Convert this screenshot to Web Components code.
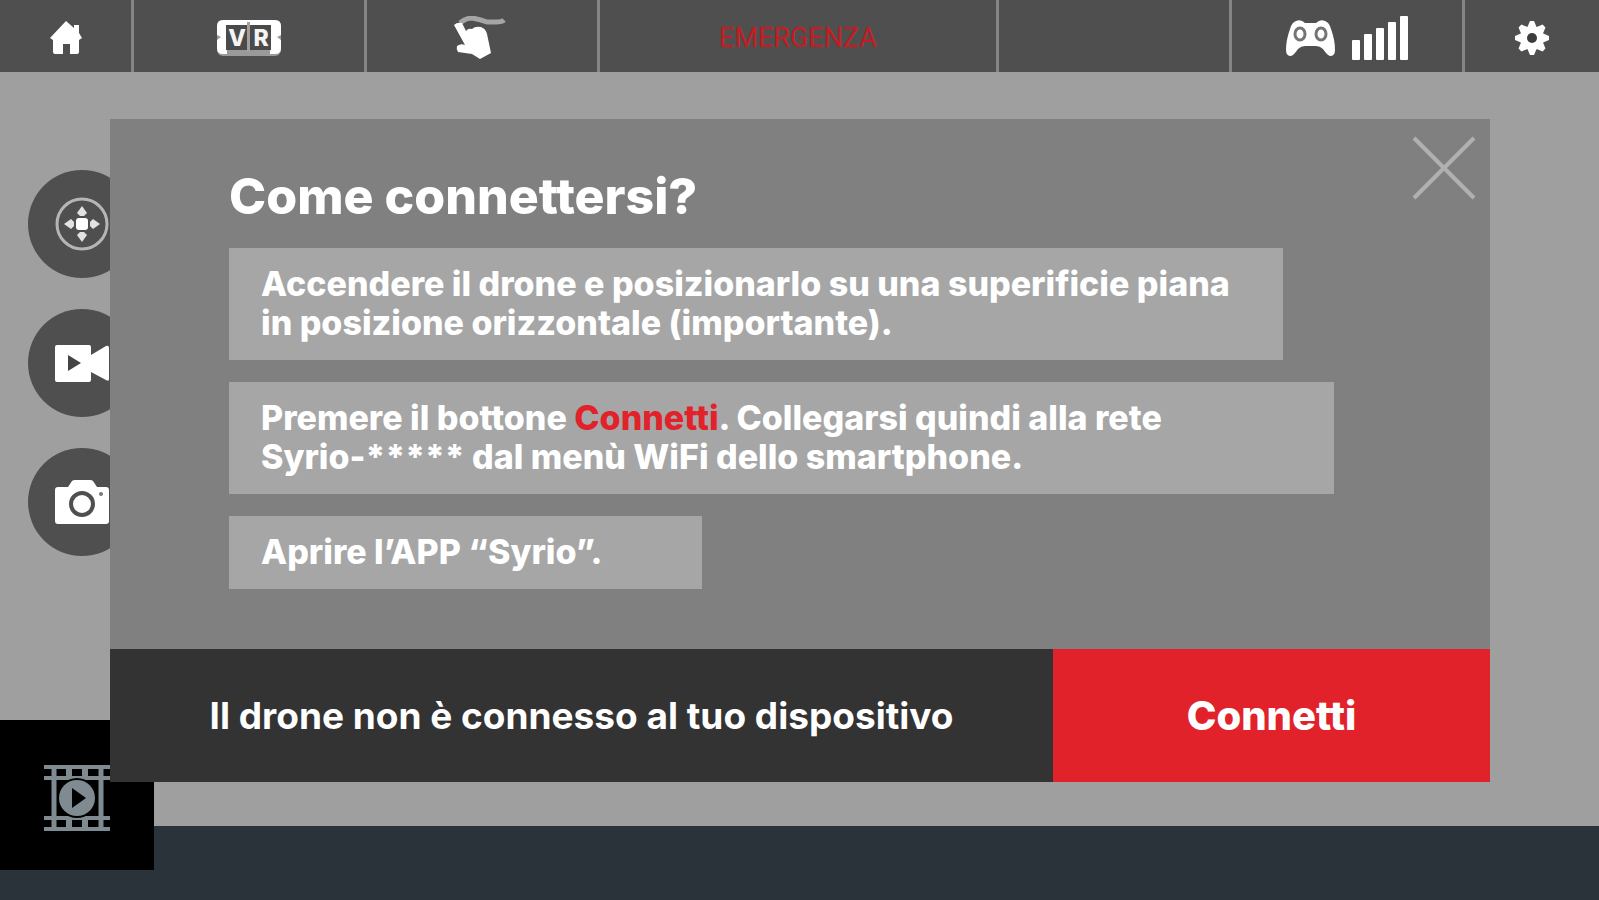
<!DOCTYPE html>
<html lang="it">
<head>
<meta charset="utf-8">
<meta name="viewport" content="width=device-width, initial-scale=1">
<title>Syrio</title>
<style>
  body {
    margin: 0;
    font-family: Inter, "Open Sans", sans-serif;
    color: white;
  }
</style>
</head>
<body>
<drone-app>
  <top-bar slot="header"></top-bar>
  <side-rail slot="main"></side-rail>
  <gallery-button slot="overlay"></gallery-button>
  <connect-dialog slot="overlay" heading="Come connettersi?" status="Il drone non è connesso al tuo dispositivo" action="Connetti">
    <step-item size="92.3%">Accendere il drone e posizionarlo su una superificie piana<br>in posizione orizzontale (importante).</step-item>
    <step-item size="96.8%">Premere il bottone <strong>Connetti</strong>. Collegarsi quindi alla rete<br>Syrio-***** dal menù WiFi dello smartphone.</step-item>
    <step-item size="41.4%">Aprire l’APP “Syrio”.</step-item>
  </connect-dialog>
</drone-app>

<script>
const icons = {
  home: `<svg width="32" height="34" viewBox="0 0 32 34" fill="white">
    <path d="M16 0 L24 7 V4 H29 V12 L32 17 L29 19 V31 Q29 33 27 33 H20 V23 H13 V33 H5 Q3 33 3 31 V19 L0 17 Z"/>
  </svg>`,
  vr: `<svg width="64" height="36" viewBox="0 0 64 36">
    <rect width="64" height="36" rx="6" fill="#9a9a9a"/>
    <path d="M6 0 H58 Q64 0 64 6 V15 L60 17 L64 20 V28 Q64 34 58 34 H53 V5 H10 V34 H6 Q0 34 0 28 V20 L4 17 L0 15 V6 Q0 0 6 0 Z" fill="white"/>
    <rect x="9" y="5" width="45" height="25" fill="#4a4a4a"/>
    <rect x="30" y="2" width="3" height="30" fill="#a0a0a0"/>
    <text x="20" y="26" font-size="23" font-weight="800" text-anchor="middle" fill="#f4f4f4">V</text>
    <text x="44" y="26" font-size="23" font-weight="800" text-anchor="middle" fill="#f4f4f4">R</text>
  </svg>`,
  hand: `<svg width="56" height="43" viewBox="0 0 56 43">
    <path d="M6 7 Q12 2 18 2 Q25 3 33 6 H42 Q48 6 50 4" fill="none" stroke="#a5a5a5" stroke-width="5"/>
    <path d="M0 9 Q3 6 8 7 L12 15 Q14 12 18 13 Q21 10 27 11 Q32 13 33 18 L37 37 L26 43 L18 38 L4 36 Q2 33 3 30 Q7 27 11 29 Z" fill="white"/>
  </svg>`,
  gamepad: `<svg width="49" height="36" viewBox="0 0 49 36">
    <path d="M10 1 Q15 -1 19 3 H30 Q34 -1 39 1 Q43 2 45 9 Q49 20 49 30 Q49 36 44 36 Q41 35 37 29 Q34 26 30 26 H19 Q15 26 12 29 Q8 35 5 36 Q0 36 0 30 Q0 20 4 9 Q6 2 10 1 Z" fill="white"/>
    <g fill="none" stroke="#757575" stroke-width="3"><ellipse cx="14" cy="14" rx="5" ry="6"/><ellipse cx="35" cy="14" rx="5" ry="6"/></g>
  </svg>`,
  signal: `<svg width="57" height="44" viewBox="0 0 57 44" fill="white">
    <rect x="0" y="24" width="8" height="20" rx="1"/><rect x="12" y="18" width="8" height="26" rx="1"/>
    <rect x="24" y="12" width="8" height="32" rx="1"/><rect x="36" y="6" width="8" height="38" rx="1"/>
    <rect x="48" y="0" width="8" height="44" rx="1"/>
  </svg>`,
  gear: `<svg width="34" height="34" viewBox="-17 -17 34 34">
    <g fill="white">
      <path id="teeth" d="M-5 -10 L-2 -17 H2 L5 -10 V10 L2 17 H-2 L-5 10 Z"/>
      <use href="#teeth" transform="rotate(45)"/>
      <use href="#teeth" transform="rotate(90)"/>
      <use href="#teeth" transform="rotate(135)"/>
      <circle r="12"/>
    </g>
    <circle r="5" fill="#3c3c3c"/>
  </svg>`,
  move: `<svg width="54" height="54" viewBox="-27 -27 54 54">
    <circle r="25" fill="none" stroke="#b5b5b5" stroke-width="3"/>
    <rect x="-6" y="-6" width="12" height="12" rx="3" fill="white"/>
    <g fill="#e2e2e2">
      <path d="M0 -18 L5 -11 L2 -8 H-2 L-5 -11 Z"/>
      <path d="M0 18 L5 11 L2 8 H-2 L-5 11 Z"/>
      <path d="M-18 0 L-11 5 L-8 2 V-2 L-11 -5 Z"/>
      <path d="M18 0 L11 5 L8 2 V-2 L11 -5 Z"/>
    </g>
  </svg>`,
  video: `<svg width="54" height="37" viewBox="0 0 54 37">
    <path d="M2 0 H34 Q36 0 36 2 V10 L51 1 Q54 0 54 3 V34 Q54 37 51 35 L36 27 V35 Q36 37 34 37 H2 Q0 37 0 35 V2 Q0 0 2 0 Z" fill="white"/>
    <path d="M13 10 L26 18 L13 26 Z" fill="#444"/>
  </svg>`,
  camera: `<svg width="54" height="44" viewBox="0 0 54 44">
    <path d="M3 7 H13 L17 1 Q18 0 20 0 H35 Q37 0 38 1 L42 7 H51 Q54 7 54 10 V41 Q54 44 51 44 H3 Q0 44 0 41 V10 Q0 7 3 7 Z" fill="white"/>
    <circle cx="27" cy="24" r="11" fill="none" stroke="#4f4f4f" stroke-width="4"/>
    <circle cx="46" cy="14" r="2" fill="#777"/>
  </svg>`,
  film: `<svg width="66" height="66" viewBox="0 0 66 66">
    <g fill="none" stroke="#7f8b90">
      <path d="M0 2 H66 M0 13 H66 M0 53 H66 M0 64 H66" stroke-width="4"/>
      <path d="M10 0 V66 M57 0 V66" stroke-width="5"/>
      <path d="M25 2 V14 M41 2 V14 M25 52 V64 M41 52 V64" stroke-width="6"/>
    </g>
    <circle cx="33" cy="33" r="20" fill="black"/>
    <circle cx="33" cy="33" r="18" fill="#7f8b90"/>
    <path d="M28 23 L42 33 L28 43 Z" fill="black"/>
  </svg>`,
  close: `<svg width="64" height="64" viewBox="0 0 64 64">
    <path d="M2 2 L62 62 M62 2 L2 62" stroke="#b0b0b0" stroke-width="4"/>
  </svg>`
};

// shared reset for the buttons inside each shadow root
const buttonCSS = `
  button {
    margin: 0;
    padding: 0;
    border: 0;
    color: inherit;
    font: inherit;
    cursor: pointer;
  }
  svg { display: block; }
`;

customElements.define("drone-app", class extends HTMLElement {
  connectedCallback() {
    this.attachShadow({ mode: "open" }).innerHTML = `
      <style>
      :host {
        position: relative;
        display: grid;
        grid-template-rows: auto 1fr 74px;
        min-height: 100vh;
        background: #9f9f9f;
      }
      footer { background: #2a323a; }
      </style>
      <slot name="header"></slot>
      <main><slot name="main"></slot></main>
      <footer></footer>
      <slot name="overlay"></slot>
    `;
  }
});

customElements.define("top-bar", class extends HTMLElement {
  connectedCallback() {
    this.attachShadow({ mode: "open" }).innerHTML = `
      <style>
      ${buttonCSS}
      :host { display: block; }
      nav {
        display: grid;
        grid-template-columns: 131fr 230fr 230fr 396fr 230fr 230fr 134fr;
        gap: 3px;
        height: 72px;
        background: #858585;
      }
      button, .cell {
        display: flex;
        align-items: center;
        justify-content: center;
        gap: 17px;
        padding-top: 3px;
        background: #4f4f4f;
      }
      .emergency {
        color: #c41c20;
        font-family: Roboto, sans-serif;
        font-size: 27px;
      }
      </style>
      <nav>
        <button aria-label="Home">${icons.home}</button>
        <button aria-label="VR">${icons.vr}</button>
        <button aria-label="Gesti">${icons.hand}</button>
        <button class="emergency">EMERGENZA</button>
        <div class="cell"></div>
        <div class="cell">${icons.gamepad}${icons.signal}</div>
        <button aria-label="Impostazioni">${icons.gear}</button>
      </nav>
    `;
  }
});

customElements.define("side-rail", class extends HTMLElement {
  connectedCallback() {
    this.attachShadow({ mode: "open" }).innerHTML = `
      <style>
      ${buttonCSS}
      :host {
        display: flex;
        flex-direction: column;
        gap: 31px;
        padding: 98px 28px;
      }
      button {
        display: grid;
        place-items: center;
        width: 108px;
        height: 108px;
        border-radius: 50%;
        background: #4f4f4f;
      }
      </style>
      <button aria-label="Controlli">${icons.move}</button>
      <button aria-label="Video">${icons.video}</button>
      <button aria-label="Foto">${icons.camera}</button>
    `;
  }
});

customElements.define("gallery-button", class extends HTMLElement {
  connectedCallback() {
    this.attachShadow({ mode: "open" }).innerHTML = `
      <style>
      ${buttonCSS}
      :host {
        position: absolute;
        left: 0;
        bottom: 30px;
      }
      button {
        display: grid;
        place-items: center;
        width: 154px;
        height: 150px;
        padding-top: 6px;
        background: black;
      }
      </style>
      <button aria-label="Galleria">${icons.film}</button>
    `;
  }
});

customElements.define("step-item", class extends HTMLElement {
  connectedCallback() {
    this.attachShadow({ mode: "open" }).innerHTML = `
      <style>
      :host {
        display: block;
        box-sizing: border-box;
        width: ${this.getAttribute("size")};
        padding: 16px 32px 18px;
        background: #a6a6a6;
        font-size: 34px;
        font-weight: 800;
        line-height: 39px;
      }
      ::slotted(strong) {
        color: #e1222a;
        font-weight: inherit;
      }
      </style>
      <slot></slot>
    `;
  }
});

customElements.define("connect-dialog", class extends HTMLElement {
  attr(name) {
    return this.getAttribute(name);
  }

  connectedCallback() {
    this.attachShadow({ mode: "open" }).innerHTML = `
      <style>
      ${buttonCSS}
      :host {
        position: absolute;
        top: 119px;
        left: 110px;
        right: 109px;
        background: #808080;
      }
      .content {
        display: flex;
        flex-direction: column;
        gap: 22px;
        padding: 47px 119px 60px;
      }
      h1 {
        margin: 0;
        font-size: 50px;
        font-weight: 800;
        line-height: 60px;
      }
      .close {
        position: absolute;
        top: 17px;
        right: 14px;
        background: none;
      }
      .actions {
        display: grid;
        grid-template-columns: 943fr 437fr;
        min-height: 133px;
      }
      .status {
        display: grid;
        place-items: center;
        margin: 0;
        background: #333;
        font-size: 37px;
        font-weight: 700;
      }
      .connect {
        background: #e1222a;
        font-size: 40px;
        font-weight: 800;
      }
      </style>
      <section role="dialog" aria-labelledby="title">
        <div class="content">
          <h1 id="title">${this.attr("heading")}</h1>
          <slot></slot>
        </div>
        <button class="close" aria-label="Chiudi">${icons.close}</button>
        <div class="actions">
          <p class="status">${this.attr("status")}</p>
          <button class="connect">${this.attr("action")}</button>
        </div>
      </section>
    `;
  }
});
</script>
</body>
</html>
